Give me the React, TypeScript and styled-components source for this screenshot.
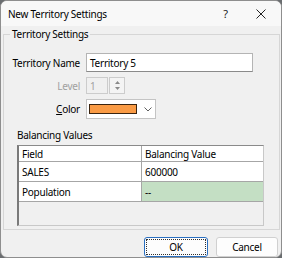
import styled, { createGlobalStyle } from 'styled-components';

const GlobalStyle = createGlobalStyle`
  html, body {
    margin: 0;
    padding: 0;
    background: #6a6d70;
  }
  body {
    font-family: "Noto Sans", "Segoe UI", sans-serif;
    font-size: 10px;
    letter-spacing: -0.25px;
    color: #000000;
  }
`;

const Window = styled.div`
  width: 282px;
  height: 258px;
  box-sizing: border-box;
  border: 1px solid #8e8e8e;
  border-radius: 7px;
  overflow: hidden;
  background: #f0f0f0;
  display: flex;
  flex-direction: column;
`;

const TitleBar = styled.div`
  height: 25px;
  flex-shrink: 0;
  display: flex;
  align-items: center;
  background: #f8f8f8;
`;

const Title = styled.div`
  flex: 1;
  padding-left: 7px;
  font-size: 10px;
  line-height: 12px;
`;

const CaptionButton = styled.div<{ $w: number }>`
  width: ${p => p.$w}px;
  height: 100%;
  display: flex;
  align-items: center;
  justify-content: center;
  font-size: 11px;
  color: #1a1a1a;
`;

const Body = styled.div`
  flex: 1;
  display: flex;
  flex-direction: column;
  padding: 2px 1px 0 2px;
`;

const GroupBox = styled.fieldset`
  margin: 0;
  padding: 0 0 3px 0;
  min-width: 0;
  border: 1px solid #d6d6d6;
  border-radius: 0;
`;

const Legend = styled.legend`
  margin-left: 6px;
  padding: 0 2px;
  font-size: 10px;
  line-height: 12px;
`;

const Form = styled.div`
  display: grid;
  grid-template-columns: 76px auto;
  column-gap: 6px;
  row-gap: 5px;
  margin-top: 13px;
  justify-items: start;
  align-items: center;
`;

const Label = styled.div<{ $disabled?: boolean }>`
  justify-self: end;
  line-height: 12px;
  color: ${p => (p.$disabled ? '#a0a0a0' : '#000000')};
  u {
    text-decoration: underline;
    text-underline-offset: 1px;
  }
`;

const TextInput = styled.div`
  width: 167px;
  height: 19px;
  box-sizing: border-box;
  border: 1px solid #b4b4b4;
  border-bottom-color: #8a8a8a;
  background: #ffffff;
  padding-left: 3px;
  display: flex;
  align-items: center;
  line-height: 12px;
`;

const Spin = styled.div`
  display: flex;
  height: 17px;
  gap: 1px;
`;

const SpinField = styled.div`
  width: 22px;
  box-sizing: border-box;
  border: 1px solid #cccccc;
  background: #f0f0f0;
  color: #a0a0a0;
  padding-left: 3px;
  display: flex;
  align-items: center;
  line-height: 12px;
`;

const SpinButtons = styled.div`
  width: 16px;
  box-sizing: border-box;
  border: 1px solid #cccccc;
  background: #f4f4f4;
  display: flex;
  flex-direction: column;
  align-items: center;
  justify-content: space-evenly;
`;

const Combo = styled.div`
  width: 70px;
  height: 20px;
  box-sizing: border-box;
  border: 1px solid #c4c4c4;
  background: #ffffff;
  display: flex;
  align-items: center;
  padding-left: 2px;
  gap: 7px;
`;

const Swatch = styled.div<{ $color: string }>`
  width: 48px;
  height: 10px;
  box-sizing: border-box;
  border: 1px solid #3a2410;
  background: ${p => p.$color};
`;

const SectionLabel = styled.div`
  margin: 10px 0 4px 13px;
  line-height: 12px;
`;

const Grid = styled.div`
  margin-left: 13px;
  width: 247px;
  height: 81px;
  box-sizing: border-box;
  border: 1px solid #c8c8c8;
  border-left: 2px solid #7a7a7a;
  border-top: 1px solid #8a8a8a;
  background: #f0f0f0;
`;

const Row = styled.div`
  display: grid;
  grid-template-columns: 122px 1fr;
`;

const Cell = styled.div<{ $h: number; $bg?: string }>`
  height: ${p => p.$h}px;
  box-sizing: border-box;
  padding-left: 3px;
  display: flex;
  align-items: center;
  line-height: 12px;
  background: ${p => p.$bg || '#ffffff'};
  border-bottom: 1px solid #a6a6a6;
  & + & {
    border-left: 1px solid #a6a6a6;
  }
`;

const Footer = styled.div`
  display: flex;
  justify-content: flex-end;
  gap: 8px;
  margin: 7px 2px 0 0;
`;

const Button = styled.div<{ $default?: boolean }>`
  width: ${p => (p.$default ? 64 : 62)}px;
  height: 20px;
  box-sizing: border-box;
  border-radius: 3px;
  background: #fdfdfd;
  border: 1px solid ${p => (p.$default ? '#2a6fc0' : '#d0d0d0')};
  display: flex;
  align-items: center;
  justify-content: center;
  padding: 1px;
  line-height: 12px;
`;

const FocusRing = styled.div`
  flex: 1;
  align-self: stretch;
  border: 1px dotted #303030;
  display: flex;
  align-items: center;
  justify-content: center;
`;

const rows = [
  { field: 'SALES', value: '600000', bg: '#ffffff' },
  { field: 'Population', value: '--', bg: '#c4dfc4' },
];

export default function App() {
  return (
    <>
      <GlobalStyle />
      <Window>
        <TitleBar>
          <Title>New Territory Settings</Title>
          <CaptionButton $w={31}>?</CaptionButton>
          <CaptionButton $w={40}>
            <svg width="10" height="10" viewBox="0 0 10 10">
              <path d="M0.5 0.5 L9.5 9.5 M9.5 0.5 L0.5 9.5" stroke="#222" strokeWidth="1" />
            </svg>
          </CaptionButton>
        </TitleBar>
        <Body>
          <GroupBox>
            <Legend>Territory Settings</Legend>
            <Form>
              <Label>Territory Name</Label>
              <TextInput>Territory 5</TextInput>
              <Label $disabled>Level</Label>
              <Spin>
                <SpinField>1</SpinField>
                <SpinButtons>
                  <svg width="5" height="3" viewBox="0 0 5 3">
                    <path d="M0 3 L2.5 0 L5 3 Z" fill="#8a8a8a" />
                  </svg>
                  <svg width="5" height="3" viewBox="0 0 5 3">
                    <path d="M0 0 L2.5 3 L5 0 Z" fill="#8a8a8a" />
                  </svg>
                </SpinButtons>
              </Spin>
              <Label>
                <u>C</u>olor
              </Label>
              <Combo>
                <Swatch $color="#fa9b45" />
                <svg width="8" height="5" viewBox="0 0 8 5">
                  <path d="M0.5 0.5 L4 4 L7.5 0.5" stroke="#606060" fill="none" strokeWidth="1" />
                </svg>
              </Combo>
            </Form>
            <SectionLabel>Balancing Values</SectionLabel>
            <Grid>
              <Row>
                <Cell $h={16}>Field</Cell>
                <Cell $h={16}>Balancing Value</Cell>
              </Row>
              {rows.map(r => (
                <Row key={r.field}>
                  <Cell $h={20}>{r.field}</Cell>
                  <Cell $h={20} $bg={r.bg}>{r.value}</Cell>
                </Row>
              ))}
            </Grid>
          </GroupBox>
          <Footer>
            <Button $default>
              <FocusRing>OK</FocusRing>
            </Button>
            <Button>Cancel</Button>
          </Footer>
        </Body>
      </Window>
    </>
  );
}
